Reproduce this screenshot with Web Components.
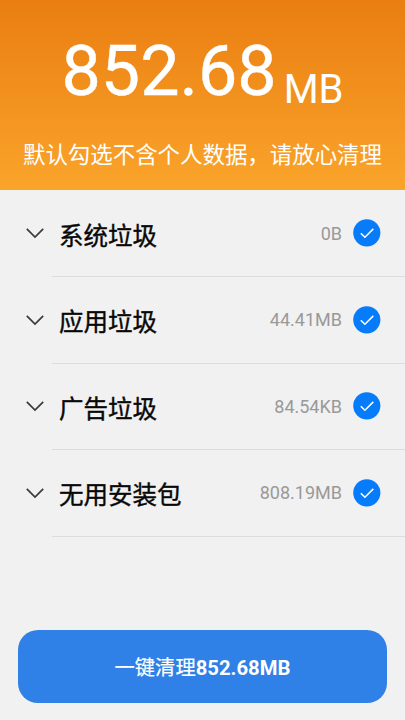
<!DOCTYPE html>
<html lang="zh-CN"><head><meta charset="utf-8"><title>清理</title>
<style>html,body{margin:0;height:100%;overflow:hidden}body{font-family:Roboto,"Noto Sans CJK SC",sans-serif;background:#f1f1f1}</style></head>
<body><cleaner-page></cleaner-page>
<script>
const define=(name,html,setup)=>customElements.define(name,class extends HTMLElement{
connectedCallback(){if(this.shadowRoot)return;this.attachShadow({mode:'open'}).innerHTML=html;if(setup)setup(this,this.shadowRoot);}});
define('size-header',`<style>
:host{display:flex;flex-direction:column;align-items:center;box-sizing:border-box;height:190px;padding-top:29px;background:linear-gradient(#ea7e11,#faa42b);color:#fff}
.size{display:flex;align-items:baseline;line-height:84px;height:84px;white-space:nowrap}
.n{font-size:70px;-webkit-text-stroke:.4px #fff}.u{font-size:40px;margin-left:7px;position:relative;top:8px}
.note{margin-top:25px;font-size:22.45px;line-height:34px;white-space:nowrap}
</style><div class="size"><span class="n">852.68</span><span class="u">MB</span></div><div class="note"><slot></slot></div>`);
define('check-mark',`<style>:host{display:block;width:28px;height:28px}svg{display:block}</style>
<svg width="28" height="28" viewBox="0 0 28 28"><circle cx="13.8" cy="13.8" r="13.6" fill="#067cfb"/><path d="M7.8 14.2l4.1 4.1 8.4-8.4" fill="none" stroke="#fff" stroke-width="1.5"/></svg>`);
define('junk-row',`<style>
:host{display:block;height:86.6px}
.row{display:flex;align-items:center;height:86px;padding:0 24px 0 26px}
.chev{display:block;width:18px;height:12px;margin-right:15px}
.name{flex:1;padding-top:2px;font-size:24.5px;-webkit-text-stroke:.4px #080808;color:#080808;white-space:nowrap}
.size{font-size:18px;color:#999;margin-right:11px}
.line{height:1px;margin-left:52px;background:#dcdcdc}
</style><div class="row"><svg class="chev" viewBox="0 0 18 12"><path d="M.8 1.9l8.2 8.2 8.2-8.2" fill="none" stroke="#3a3a3a" stroke-width="1.7"/></svg><span class="name"><slot></slot></span><span class="size"></span><check-mark></check-mark></div><div class="line"></div>`,(el,r)=>{r.querySelector('.size').textContent=el.getAttribute('size')});
define('clean-button',`<style>:host{display:block}button{display:block;width:100%;height:72.5px;border:0;border-radius:20px;background:#2f80e7;color:#fff;font:400 20.3px Roboto,"Noto Sans CJK SC",sans-serif;padding:0;-webkit-text-stroke:.2px #fff}::slotted(b){font-weight:700;-webkit-text-stroke:0}</style><button><slot></slot></button>`);
define('cleaner-page',`<style>:host{display:flex;flex-direction:column;width:405px;height:720px;background:#f1f1f1}
clean-button{margin:auto 18px 17.5px}</style>
<size-header>默认勾选不含个人数据，请放心清理</size-header>
<main><junk-row size="0B">系统垃圾</junk-row><junk-row size="44.41MB">应用垃圾</junk-row><junk-row size="84.54KB">广告垃圾</junk-row><junk-row size="808.19MB">无用安装包</junk-row></main>
<clean-button>一键清理<b>852.68MB</b></clean-button>`);
</script></body></html>
